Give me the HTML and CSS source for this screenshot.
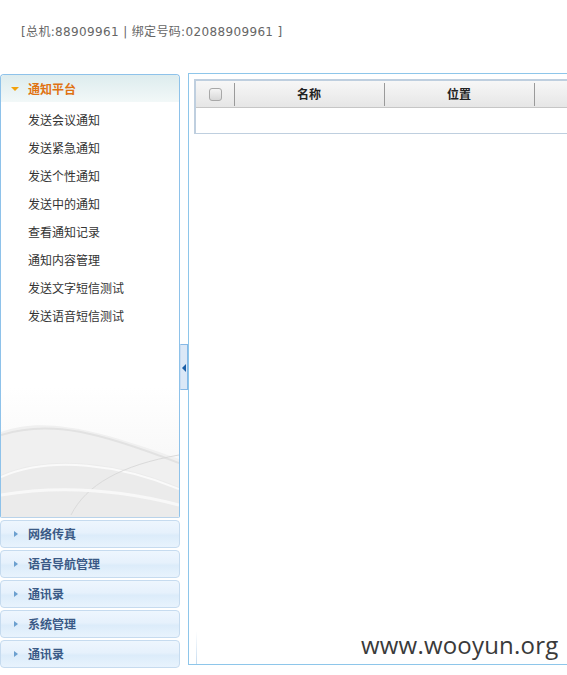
FILE: index.html
```html
<!DOCTYPE html>
<html>
<head>
<meta charset="utf-8">
<link rel="stylesheet" href="styles.css">
</head>
<body>
<div class="top">[总机:88909961 | 绑定号码:02088909961 ]</div>
<div class="main">
  <div class="west">
    <div class="panel open">
      <div class="phead"><span class="tri-down"></span>通知平台</div>
      <ul class="menu">
        <li>发送会议通知</li>
        <li>发送紧急通知</li>
        <li>发送个性通知</li>
        <li>发送中的通知</li>
        <li>查看通知记录</li>
        <li>通知内容管理</li>
        <li>发送文字短信测试</li>
        <li>发送语音短信测试</li>
      </ul>
      <svg class="wave" width="178" height="130" viewBox="0 0 178 130" preserveAspectRatio="none">
        <defs>
          <linearGradient id="g1" x1="0" y1="0" x2="0" y2="1">
            <stop offset="0" stop-color="#ffffff"/>
            <stop offset="1" stop-color="#f3f3f3"/>
          </linearGradient>
        </defs>
        <rect x="0" y="0" width="178" height="130" fill="url(#g1)"/>
        <path d="M0 45 C40 30 90 40 178 72 L178 130 L0 130 Z" fill="#f0f0f0"/>
        <path d="M0 48 C50 32 100 46 178 76" stroke="#e2e2e2" stroke-width="2" fill="none"/>
        <path d="M0 88 C50 66 120 76 178 100 L178 130 L0 130 Z" fill="#ebebeb"/>
        <path d="M0 90 C50 68 120 78 178 102" stroke="#fafafa" stroke-width="2" fill="none"/>
        <path d="M70 128 C85 98 120 78 178 68" stroke="#dadada" stroke-width="1" fill="none"/>
        <path d="M0 108 C60 98 120 103 178 118" stroke="#f8f8f8" stroke-width="3" fill="none"/>
      </svg>
    </div>
    <div class="panel closed"><span class="tri-right"></span>网络传真</div>
    <div class="panel closed"><span class="tri-right"></span>语音导航管理</div>
    <div class="panel closed"><span class="tri-right"></span>通讯录</div>
    <div class="panel closed"><span class="tri-right"></span>系统管理</div>
    <div class="panel closed"><span class="tri-right"></span>通讯录</div>
  </div>
  <div class="split">
    <div class="toggle"><span class="tri-left"></span></div>
  </div>
  <div class="center">
    <div class="grid">
      <div class="ghead">
        <div class="gcol ck"><span class="box"></span></div>
        <div class="gcol name">名称</div>
        <div class="gcol pos">位置</div>
        <div class="gcol more"></div>
      </div>
      <div class="gbody"></div>
    </div>
    <div class="scrollline"></div>
  </div>
</div>
<div class="watermark">www.wooyun.org</div>
</body>
</html>
```
FILE: styles.css
```css
html, body {
  margin: 0;
  padding: 0;
  background: #fff;
  overflow: hidden;
  width: 567px;
  height: 675px;
}
body {
  font-family: "DejaVu Sans", "Noto Sans CJK SC", sans-serif;
  font-size: 12px;
  position: relative;
}
.top {
  height: 73px;
  box-sizing: border-box;
  padding: 24px 0 0 21px;
  color: #666;
  font-size: 12px;
  line-height: 16px;
  letter-spacing: 0.35px;
}
.main {
  display: flex;
  align-items: flex-start;
  width: 567px;
}
.west {
  width: 180px;
  flex: none;
  margin-top: 1px;
}
.panel {
  box-sizing: border-box;
  border: 1px solid #99c4e8;
}
.panel.open {
  height: 444px;
  border-radius: 4px 4px 2px 2px;
  position: relative;
  overflow: hidden;
  border-color: #8ec2ea;
  border-bottom-color: #b9d3ea;
}
.phead {
  height: 27px;
  line-height: 27px;
  background: linear-gradient(#ddecee, #f2f8f8);
  color: #e07212;
  font-weight: bold;
  font-family: "Noto Sans CJK SC", sans-serif;
  padding-left: 27px;
  position: relative;
  border-radius: 3px 3px 0 0;
}
.tri-down {
  position: absolute;
  left: 10px;
  top: 12px;
  width: 0;
  height: 0;
  border-left: 4px solid transparent;
  border-right: 4px solid transparent;
  border-top: 4px solid #f2a20c;
}
.menu {
  list-style: none;
  margin: 0;
  padding: 4px 0 0 27px;
  font-family: "Noto Sans CJK SC", sans-serif;
  color: #333;
}
.menu li {
  height: 28px;
  line-height: 28px;
}
.wave {
  position: absolute;
  left: 0;
  bottom: 0;
  display: block;
}
.panel.closed {
  height: 28px;
  margin-top: 2px;
  border-radius: 4px;
  border-color: #c6dbef;
  background: linear-gradient(#eef6fe 0%, #e6f1fc 45%, #dcecfa 55%, #e8f3fd 100%);
  color: #3a5a86;
  font-weight: bold;
  font-family: "Noto Sans CJK SC", sans-serif;
  line-height: 26px;
  padding-left: 27px;
  position: relative;
}
.panel.closed:first-of-type { margin-top: 3px; }
.tri-right {
  position: absolute;
  left: 13px;
  top: 10px;
  width: 0;
  height: 0;
  border-top: 3.5px solid transparent;
  border-bottom: 3.5px solid transparent;
  border-left: 4px solid #6b9fcf;
}
.split {
  width: 8px;
  flex: none;
  height: 591px;
  position: relative;
}
.toggle {
  position: absolute;
  left: 0;
  top: 271px;
  width: 8px;
  height: 46px;
  box-sizing: border-box;
  border: 1px solid #86b8e6;
  background: #dbe8f7;
  border-left-color: #c8dcf2;
}
.tri-left {
  position: absolute;
  left: 1px;
  top: 19px;
  width: 0;
  height: 0;
  border-top: 4px solid transparent;
  border-bottom: 4px solid transparent;
  border-right: 4px solid #1a5fa8;
}
.center {
  flex: 1;
  min-width: 0;
  height: 592px;
  box-sizing: border-box;
  border: 1px solid #8ec6ea;
  border-right: none;
  position: relative;
  overflow: hidden;
}
.grid {
  margin: 5px 0 0 5px;
  height: 55px;
  box-sizing: border-box;
  border: 2px solid #bfcfdf;
  border-right: none;
}
.ghead {
  display: flex;
  height: 26px;
  background: linear-gradient(#f7f7f7, #e6e6e6);
  border-bottom: 1px solid #c6c6c6;
  font-family: "Noto Sans CJK SC", sans-serif;
  font-weight: bold;
  color: #222;
}
.gcol {
  box-sizing: border-box;
  line-height: 26px;
  text-align: center;
  position: relative;
  flex: none;
}
.gcol + .gcol::before {
  content: "";
  position: absolute;
  left: 0;
  top: 2px;
  bottom: 1px;
  border-left: 1px solid #9a9a9a;
}
.ck { width: 38px; }
.name { width: 150px; }
.pos { width: 150px; }
.more { flex: 1; }
.box {
  display: inline-block;
  width: 11px;
  height: 11px;
  border: 1px solid #a8a8a8;
  border-radius: 3px;
  background: linear-gradient(#f4f4f4, #d8d8d8);
  vertical-align: middle;
  margin-top: -3px;
}
.gbody {
  height: 25px;
  background: #fff;
}
.scrollline {
  position: absolute;
  left: 7px;
  top: 557px;
  width: 1px;
  height: 33px;
  background: linear-gradient(#ffffff, #c6dcf0);
}
.watermark {
  position: absolute;
  left: 361px;
  top: 629px;
  font-family: "Open Sans", sans-serif;
  font-size: 24px;
  line-height: 32px;
  color: #3a3a3a;
  letter-spacing: 0.2px;
}
```
